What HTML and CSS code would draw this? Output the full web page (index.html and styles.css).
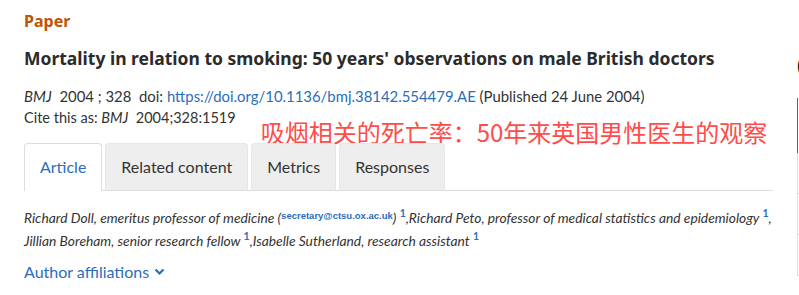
FILE: index.html
```html
<!DOCTYPE html>
<html lang="en">
<head>
    <meta charset="UTF-8">
    <title>Mortality in relation to smoking</title>
    <link rel="stylesheet" href="styles.css">
</head>
<body>
    <div class="page">
        <main class="article">
            <div class="type">Paper</div>
            <h1 class="title">Mortality in relation to smoking: 50 years' observations on male British doctors</h1>

            <div class="meta doi-line">
                <em>BMJ</em>&nbsp; 2004 ; 328&nbsp; doi: <a href="#">https://doi.org/10.1136/bmj.38142.554479.AE</a> (Published 24 June 2004)
            </div>
            <div class="cite-row">
                <div class="meta">Cite this as: <em>BMJ</em>&nbsp; 2004;328:1519</div>
                <div class="translation">吸烟相关的死亡率：50年来英国男性医生的观察</div>
            </div>

            <ul class="tabs">
                <li class="tab active">Article</li>
                <li class="tab">Related content</li>
                <li class="tab">Metrics</li>
                <li class="tab">Responses</li>
            </ul>

            <p class="authors">
                Richard Doll, emeritus professor of medicine (<a class="email" href="#">secretary@ctsu.ox.ac.uk</a>) <sup>1</sup>,Richard Peto, professor of medical statistics and epidemiology <sup>1</sup>,<br>
                Jillian Boreham, senior research fellow <sup>1</sup>,Isabelle Sutherland, research assistant <sup>1</sup>
            </p>

            <a class="affiliations" href="#">Author affiliations
                <svg width="11" height="8" viewBox="0 0 11 8"><path d="M1.5 1.5 L5.5 5.5 L9.5 1.5" fill="none" stroke="#2a6ebb" stroke-width="2.2"/></svg>
            </a>
        </main>
        <aside class="sidebar">
            <div class="side-cap">(</div>
            <div class="side-box">
                <div class="side-accent"></div>
                <div class="side-row"></div>
                <div class="side-row"></div>
                <div class="side-row"></div>
            </div>
        </aside>
    </div>
</body>
</html>
```

FILE: styles.css
```css
body {
  margin: 0;
  padding: 0;
  background: #fff;
  font-family: "Lato", "Liberation Sans", sans-serif;
  color: #333;
  overflow: hidden;
}

.page {
  display: flex;
  width: 799px;
  height: 295px;
  overflow: hidden;
}

.article {
  width: 749px;
  padding: 10px 0 0 24px;
  flex: none;
}

.type {
  color: #c25400;
  font-family: "Noto Sans", sans-serif;
  font-weight: bold;
  font-size: 16px;
  line-height: 22px;
}

.title {
  margin: 14px 0 0;
  font-family: "Noto Sans", sans-serif;
  font-weight: bold;
  font-size: 17.5px;
  line-height: 24px;
  color: #2b2b2b;
  white-space: nowrap;
}

.meta {
  font-size: 14.5px;
  line-height: 22px;
  color: #333;
  white-space: nowrap;
}

.doi-line {
  margin-top: 15px;
  font-size: 14.9px;
}

.meta a {
  color: #2a6ebb;
  text-decoration: none;
}

.cite-row {
  display: flex;
  align-items: flex-start;
  height: 36px;
}

.translation {
  margin: 13px 0 0 25px;
  color: #ff4b4b;
  font-family: "Noto Sans CJK SC", sans-serif;
  font-size: 24px;
  line-height: 24px;
  white-space: nowrap;
}

.tabs {
  list-style: none;
  margin: 0;
  padding: 0;
  display: flex;
  gap: 3px;
  border-bottom: 1px solid #ddd;
}

.tab {
  background: #eee;
  border: 1px solid #e6e6e6;
  border-bottom: none;
  border-radius: 4px 4px 0 0;
  padding: 0 15px;
  height: 46px;
  line-height: 46px;
  font-size: 16px;
  color: #333;
}

.tab.active {
  background: #fff;
  border-color: #ddd;
  color: #2a6ebb;
  margin-bottom: -1px;
  height: 47px;
}

.authors {
  margin: 13px 0 0;
  font-style: italic;
  font-size: 13.8px;
  line-height: 23px;
  color: #333;
  white-space: nowrap;
}

.authors sup {
  color: #2a6ebb;
  font-weight: bold;
  font-style: normal;
  font-size: 10.5px;
  line-height: 0;
}

.email {
  color: #2a6ebb;
  font-family: "Liberation Sans", sans-serif;
  font-style: normal;
  font-size: 9.5px;
  font-weight: bold;
  vertical-align: 4px;
  text-decoration: none;
}

.affiliations {
  display: inline-flex;
  align-items: center;
  gap: 5px;
  margin-top: 10px;
  color: #2a6ebb;
  font-size: 16px;
  text-decoration: none;
}

.sidebar {
  margin-left: 24px;
  flex: none;
  width: 30px;
}

.side-cap {
  margin-top: 55px;
  font-family: "Liberation Sans", sans-serif;
  font-weight: bold;
  font-size: 18px;
  line-height: 20px;
  color: #111;
}

.side-box {
  margin-top: 23px;
  border-left: 1px solid #ddd;
}

.side-accent {
  height: 55px;
  margin-left: -1px;
  border-left: 1px solid #2a6ebb;
}

.side-row {
  height: 40px;
  border-bottom: 1px solid #ddd;
}

.side-row:first-child {
  height: 34px;
}
```
